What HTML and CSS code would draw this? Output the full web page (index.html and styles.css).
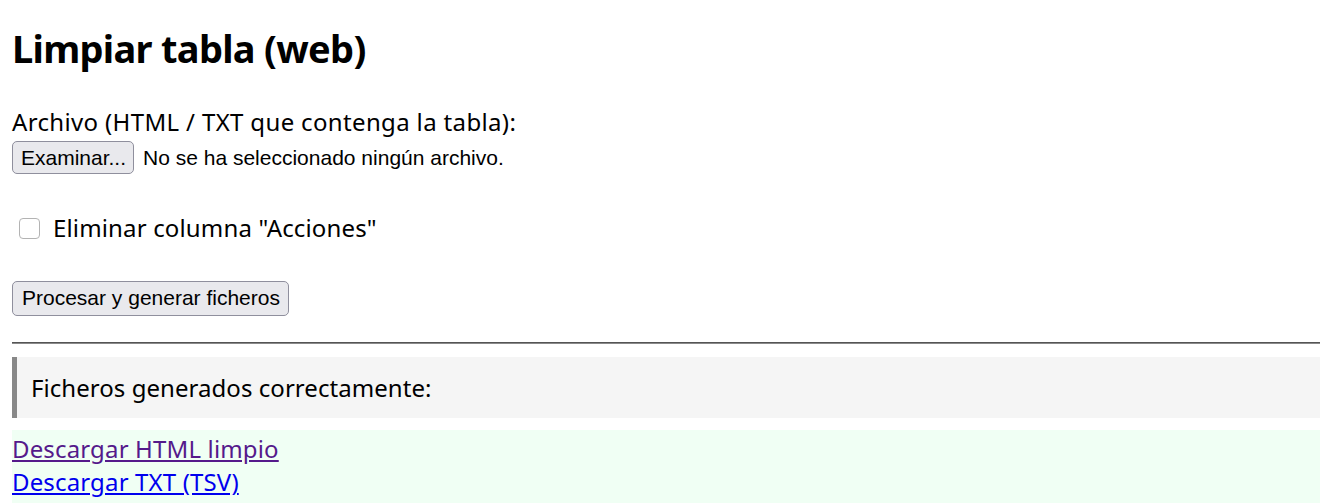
FILE: index.html
```html
<!DOCTYPE html>
<html lang="es">
<head>
<meta charset="utf-8">
<title>Limpiar tabla (web)</title>
<link rel="stylesheet" href="styles.css">
</head>
<body>
  <h1 class="title">Limpiar tabla (web)</h1>
  <form class="form">
    <label class="field-label">Archivo (HTML / TXT que contenga la tabla):</label>
    <div class="file-row">
      <button type="button" class="btn btn-file">Examinar...</button>
      <span class="file-status">No se ha seleccionado ningún archivo.</span>
    </div>
    <label class="check-row">
      <span class="checkbox"></span>
      <span class="check-text">Eliminar columna "Acciones"</span>
    </label>
    <div class="submit-row">
      <button type="button" class="btn btn-submit">Procesar y generar ficheros</button>
    </div>
  </form>
  <hr class="divider">
  <div class="notice">Ficheros generados correctamente:</div>
  <div class="downloads">
    <a href="#" class="link visited">Descargar HTML limpio</a>
    <a href="#" class="link">Descargar TXT (TSV)</a>
  </div>
</body>
</html>
```
FILE: styles.css
```css
html, body {
  margin: 0;
  padding: 0;
  background: #ffffff;
}

body {
  padding: 0 7px 0 12px;
  font-family: "Noto Sans", "Open Sans", sans-serif;
  font-size: 24px;
  line-height: 32px;
  letter-spacing: 0.15px;
  color: #000;
}

.title {
  margin: 21px 0 31px;
  font-size: 38px;
  line-height: 54px;
  font-weight: 700;
  letter-spacing: -0.7px;
}

.form {
  display: flex;
  flex-direction: column;
  align-items: flex-start;
}

.field-label {
  display: block;
  line-height: 32px;
  letter-spacing: 0.35px;
}

.file-row {
  display: flex;
  align-items: center;
  gap: 9px;
  margin-top: 3px;
}

.btn {
  font-family: "Liberation Sans", Arial, sans-serif;
  font-size: 21px;
  letter-spacing: 0;
  color: #000;
  background: #e9e9ed;
  border: 1px solid #8f8f9d;
  border-radius: 5px;
  padding: 0 8px 0 9px;
  margin: 0;
  cursor: default;
}

.btn-file {
  height: 33px;
  padding: 0 7px 0 8px;
}

.btn-submit {
  height: 35px;
}

.file-status {
  font-family: "Liberation Sans", Arial, sans-serif;
  font-size: 21px;
  letter-spacing: 0;
  line-height: 33px;
}

.check-row {
  display: flex;
  align-items: center;
  gap: 13px;
  margin-top: 38px;
  padding-left: 7px;
  line-height: 32px;
}

.checkbox {
  display: inline-block;
  width: 19px;
  height: 19px;
  border: 1.5px solid #b3b3b3;
  border-radius: 4px;
  background: #fff;
}

.submit-row {
  margin-top: 36px;
}

.divider {
  margin: 26px 0 0;
  height: 0;
  border: 0;
  border-top: 1px solid #555;
  border-bottom: 1px solid #8a8a8a;
}

.notice {
  margin-top: 13px;
  background: #f5f5f5;
  border-left: 5px solid #888;
  padding: 15px 0 14px 14px;
  line-height: 32px;
  letter-spacing: 0.05px;
}

.downloads {
  margin-top: 12px;
  background: #f0fff4;
  padding: 2px 0 20px;
  display: flex;
  flex-direction: column;
  align-items: flex-start;
  line-height: 33.5px;
}

.link {
  color: #0000ee;
  text-decoration: underline;
}

.link.visited {
  color: #551a8b;
}
```
